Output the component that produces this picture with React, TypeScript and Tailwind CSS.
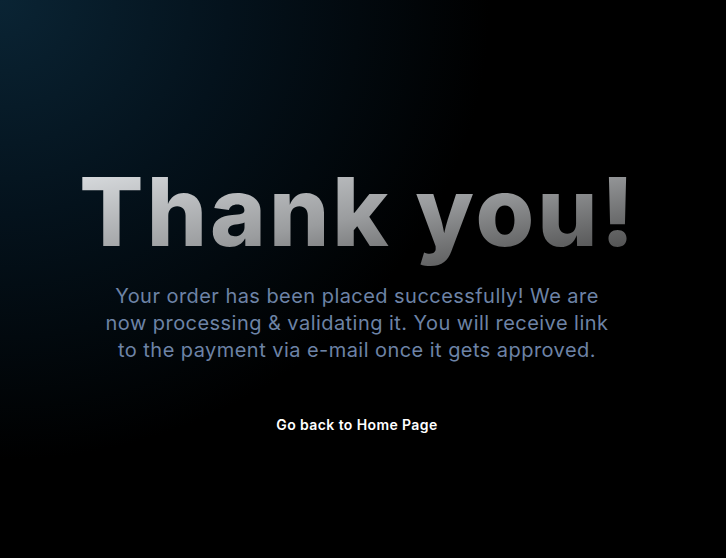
export default function App() {
  return (
    <div className="min-h-screen w-full bg-black bg-[radial-gradient(ellipse_90%_110%_at_0%_0%,#0a2434_0%,#04121c_35%,#000000_75%)] flex flex-col items-center justify-center pt-[40px] pr-[12px] font-['Inter',sans-serif]">
      {/* Heading with metallic gradient fill */}
      <h1 className="text-[95px] leading-none font-extrabold tracking-[3px] pl-[3px] bg-gradient-to-br from-[#dfe2e5] via-[#9a9c9e] to-[#3e3e3e] bg-clip-text text-transparent pb-3">
        Thank you!
      </h1>
      <p className="mt-[12px] max-w-[512px] text-center text-[20px] leading-[27px] tracking-[0.45px] text-[#6d83a6]">
        Your order has been placed successfully! We are now processing &amp; validating it. You will receive link to the payment via e-mail once it gets approved.
      </p>
      <a href="#" className="mt-[50px] text-[14px] font-semibold tracking-[0.4px] text-white">
        Go back to Home Page
      </a>
    </div>
  );
}
